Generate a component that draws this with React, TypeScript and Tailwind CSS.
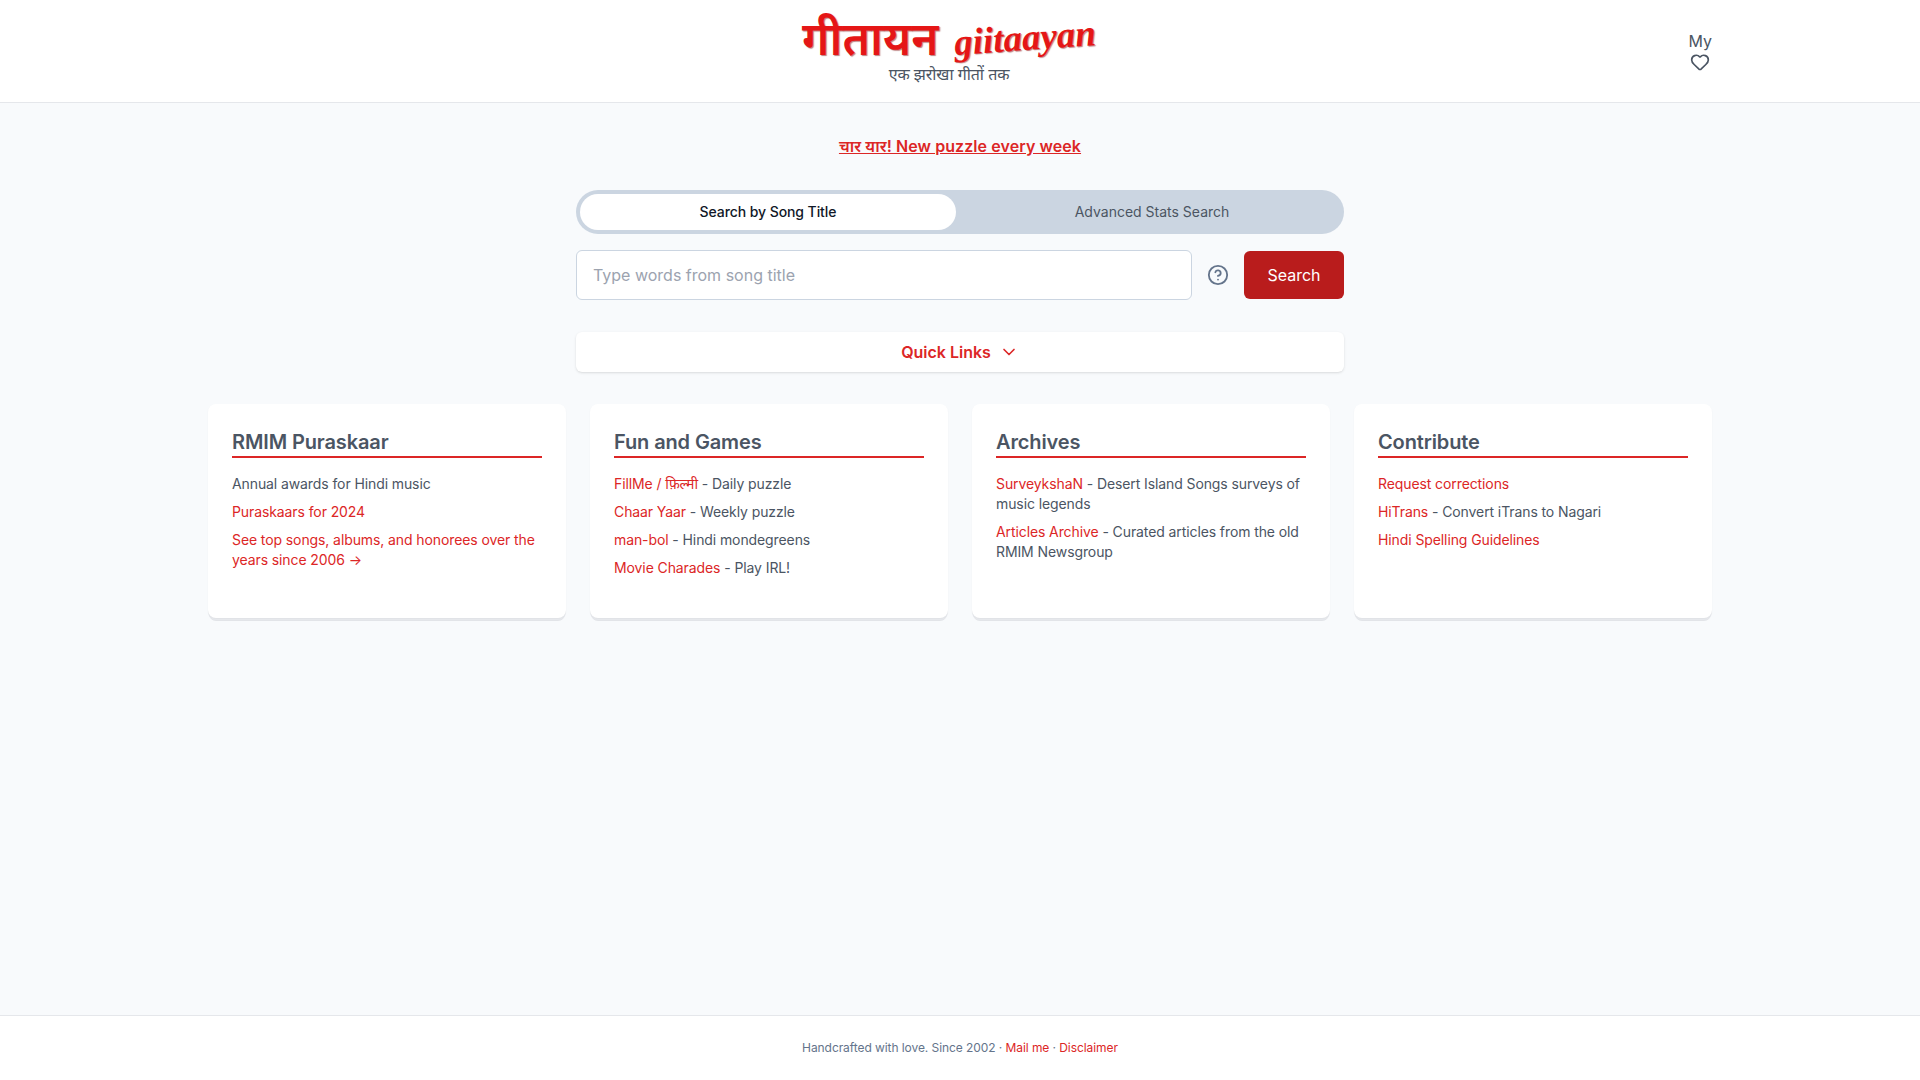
import { ChevronDown, CircleHelp, Heart } from "lucide-react"
import type { ReactNode } from "react"

const sans = "font-['Inter','Noto_Sans',sans-serif]"

function Red({ children }: { children: ReactNode }) {
  return <a className="text-[#dc2626]">{children}</a>
}

function Card({ title, children }: { title: string; children: ReactNode }) {
  return (
    <section className="h-[214px] rounded-lg bg-white px-6 pt-6 shadow-[0_1px_2px_rgba(0,0,0,0.04),0_2px_0_0_#e8eaee,0_4px_0_-1px_#e2e4e8]">
      <h2 className="border-b-2 border-[#dc2626] text-xl leading-[28px] font-semibold tracking-[-0.006em] text-[#4b5563]">{title}</h2>
      <div className="mt-4 flex flex-col gap-2 text-sm leading-5 tracking-[-0.007em] text-[#4b5563]">{children}</div>
    </section>
  )
}

export default function App() {
  return (
    <div className={`flex min-h-screen flex-col bg-[#f8fafc] ${sans}`}>
      <header className="h-[103px] border-b border-[#e5e7eb] bg-white">
        <div className="mx-auto flex h-full max-w-[1504px] items-start">
          <div className="flex-1" />
          <div className="mr-[22px] flex w-[294px] flex-col items-center pt-[15px]">
            <div className="flex h-[46px] w-full items-center justify-between whitespace-nowrap text-[#e51616] [text-shadow:1px_1px_1px_rgba(120,0,0,0.5)]">
              <span className="text-[46px] leading-[46px] font-semibold">गीतायन</span>
              <span className="-rotate-[4deg] font-['Liberation_Serif',serif] text-[37px] leading-[46px] font-bold italic">giitaayan</span>
            </div>
            <p className="mt-[1px] text-base leading-6 tracking-[-0.01em] text-[#4b5563]">एक झरोखा गीतों तक</p>
          </div>
          <div className="flex flex-1 justify-end pt-[29px]">
            <div className="flex flex-col items-center text-[#4b5563]">
              <span className="text-base leading-[24px]">My</span>
              <Heart className="-mt-px h-5 w-5" strokeWidth={2} />
            </div>
          </div>
        </div>
      </header>

      <main className="mx-auto flex w-full max-w-[1504px] flex-1 flex-col">
        <p className="mt-[31px] text-center text-base leading-6 font-semibold tracking-[0.005em] text-[#dc2626] underline">चार यार! New puzzle every week</p>

        <div className="mx-auto mt-8 w-[768px]">
          <div className="flex h-[44px] rounded-full bg-[#cbd5e1] text-sm">
            <div className="m-1 flex w-[376px] items-center justify-center rounded-full bg-white font-medium tracking-[-0.006em] text-[#111827]">Search by Song Title</div>
            <div className="flex flex-1 items-center justify-center text-[#4b5563]">Advanced Stats Search</div>
          </div>
          <div className="mt-4 flex items-center">
            <input
              placeholder="Type words from song title"
              className="h-[50px] w-[616px] rounded-md border border-[#cbd5e1] bg-white px-4 text-base placeholder:text-[#9ca3af]"
            />
            <CircleHelp className="ml-[15px] h-[22px] w-[22px] text-[#64748b]" strokeWidth={2} />
            <button className="ml-[15px] h-[48px] w-[100px] rounded-md bg-[#b91c1c] text-base font-normal text-white">Search</button>
          </div>
          <div className="mt-8 flex h-[40px] items-center justify-center gap-2 rounded-md bg-white text-base font-semibold text-[#dc2626] shadow-sm">
            Quick Links <ChevronDown className="h-5 w-5" strokeWidth={2} />
          </div>
        </div>

        <div className="mt-8 grid grid-cols-4 gap-6">
          <Card title="RMIM Puraskaar">
            <p>Annual awards for Hindi music</p>
            <p><Red>Puraskaars for 2024</Red></p>
            <p><Red>See top songs, albums, and honorees over the years since 2006 →</Red></p>
          </Card>
          <Card title="Fun and Games">
            <p><Red>FillMe / फ़िल्मी</Red> - Daily puzzle</p>
            <p><Red>Chaar Yaar</Red> - Weekly puzzle</p>
            <p><Red>man-bol</Red> - Hindi mondegreens</p>
            <p><Red>Movie Charades</Red> - Play IRL!</p>
          </Card>
          <Card title="Archives">
            <p><Red>SurveykshaN</Red> - Desert Island Songs surveys of music legends</p>
            <p><Red>Articles Archive</Red> - Curated articles from the old RMIM Newsgroup</p>
          </Card>
          <Card title="Contribute">
            <p><Red>Request corrections</Red></p>
            <p><Red>HiTrans</Red> - Convert iTrans to Nagari</p>
            <p><Red>Hindi Spelling Guidelines</Red></p>
          </Card>
        </div>
      </main>

      <footer className="flex h-[65px] items-center justify-center border-t border-[#e5e7eb] bg-white text-xs tracking-[-0.006em] text-[#64748b]">
        <p>Handcrafted with love. Since 2002 · <Red>Mail me</Red> · <Red>Disclaimer</Red></p>
      </footer>
    </div>
  )
}
